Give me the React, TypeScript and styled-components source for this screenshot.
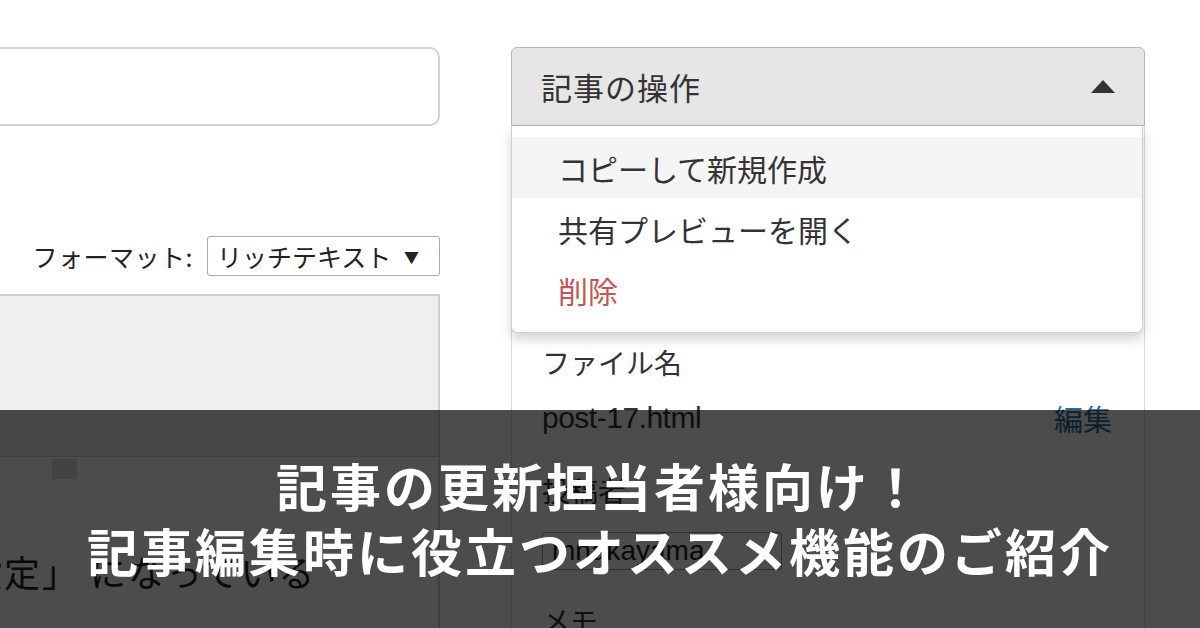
import React from "react";
import styled, { createGlobalStyle } from "styled-components";

const GlobalStyle = createGlobalStyle`
  html, body { margin: 0; padding: 0; background: #fff; }
  body {
    font-family: "Noto Sans CJK JP", "Noto Sans", sans-serif;
    color: #333;
    overflow: hidden;
  }
  * { box-sizing: border-box; }
`;

const Page = styled.div`
  position: relative;
  width: 1200px;
  height: 628px;
  overflow: hidden;
  background: #fff;
`;

const Columns = styled.div`
  display: grid;
  grid-template-columns: 480px 634px;
  column-gap: 71px;
  margin-left: -40px;
  padding-top: 47px;
`;

const LeftCol = styled.div`
  display: flex;
  flex-direction: column;
`;

const TitleInput = styled.div`
  height: 79px;
  border: 2px solid #d2d2d2;
  border-radius: 10px;
  background: #fff;
`;

const FormatRow = styled.div`
  margin-top: 110px;
  display: flex;
  justify-content: flex-end;
  align-items: center;
  gap: 14px;
`;

const FormatLabel = styled.span`
  font-size: 25px;
  color: #222;
  letter-spacing: 0.5px;
`;

const Select = styled.div<{ $w: number }>`
  width: ${(p) => p.$w}px;
  height: 40px;
  border: 1px solid #a9a9a9;
  border-radius: 3px;
  background: #fff;
  display: flex;
  align-items: center;
  justify-content: space-between;
  padding: 0 20px 0 9px;
  font-size: 25px;
  color: #222;
  line-height: 1;
`;

const Caret = styled.span`
  font-size: 15px;
  color: #222;
`;

const Editor = styled.div`
  margin-top: 18px;
  border: 2px solid #cfcfcf;
  display: flex;
  flex-direction: column;
  height: 420px;
`;

const Toolbar = styled.div`
  height: 161px;
  background: #efefef;
  border-bottom: 1px solid #d0d0d0;
  flex-shrink: 0;
`;

const EditorBody = styled.div`
  position: relative;
  flex: 1;
  background: #fff;
  padding: 2px 0 0 40px;
`;

const Handle = styled.div`
  width: 25px;
  height: 20px;
  background: #e2e2e2;
  margin-left: 50px;
`;

const BodyLine = styled.div`
  margin-left: -150px;
  margin-top: 66px;
  font-size: 36px;
  color: #222;
  white-space: nowrap;
  letter-spacing: 2px;
  & + & { margin-top: 22px; }
`;

const RightCol = styled.div`
  display: flex;
  flex-direction: column;
`;

const Dropdown = styled.div`
  position: relative;
  z-index: 2;
`;

const DropButton = styled.div`
  height: 79px;
  background: #e6e6e6;
  border: 1px solid #b5b5b5;
  border-radius: 6px 6px 0 0;
  display: flex;
  align-items: center;
  justify-content: space-between;
  padding: 0 29px 0 29px;
  font-size: 31px;
  color: #333;
  letter-spacing: 1px;
`;

const Menu = styled.div`
  position: absolute;
  top: 100%;
  left: 0;
  right: 2px;
  background: #fff;
  border: 1px solid #cfcfcf;
  border-top: none;
  border-radius: 0 0 6px 6px;
  box-shadow: 0 6px 12px rgba(0, 0, 0, 0.18);
  padding: 11px 0 12px;
`;

const MenuItem = styled.div<{ $active?: boolean; $danger?: boolean }>`
  height: 61px;
  display: flex;
  align-items: center;
  padding-left: 46px;
  font-size: 30px;
  color: ${(p) => (p.$danger ? "#c55552" : "#333")};
  background: ${(p) => (p.$active ? "#f5f5f5" : "transparent")};
`;

const Panel = styled.div`
  border: 1px solid #dcdcdc;
  border-top: none;
  padding: 216px 30px 0 30px;
  height: 520px;
  display: flex;
  flex-direction: column;
`;

const FieldLabel = styled.div<{ $gap: number }>`
  margin-top: ${(p) => p.$gap}px;
  height: 40px;
  display: flex;
  align-items: center;
  font-size: 28px;
  color: #333;
`;

const FileRow = styled.div`
  margin-top: 16px;
  height: 40px;
  display: flex;
  align-items: center;
  justify-content: space-between;
`;

const FileName = styled.span`
  font-family: "Liberation Sans", Arial, sans-serif;
  font-size: 30px;
  color: #333;
  letter-spacing: -0.5px;
`;

const EditLink = styled.span`
  font-size: 29px;
  color: #2d6a9c;
  margin-right: 2px;
`;

const AuthorSelect = styled(Select)`
  margin-top: 22px;
  height: 38px;
  font-family: "Liberation Sans", Arial, sans-serif;
  font-size: 28px;
  border-color: #999;
  padding-right: 14px;
`;

const Overlay = styled.div`
  position: absolute;
  left: 0;
  right: 0;
  bottom: 0;
  height: 218px;
  background: rgba(0, 0, 0, 0.7);
  z-index: 5;
  display: flex;
  flex-direction: column;
  align-items: center;
  justify-content: center;
  padding-bottom: 2px;
`;

const Headline = styled.div`
  color: #fff;
  font-family: "Noto Sans CJK JP", sans-serif;
  font-weight: 700;
  font-size: 51px;
  line-height: 65px;
  letter-spacing: 3px;
  white-space: nowrap;
`;

const UpTriangle = () => (
  <svg width="24" height="13" viewBox="0 0 24 13">
    <polygon points="12,0 24,13 0,13" fill="#333" />
  </svg>
);

export default function App() {
  return (
    <>
      <GlobalStyle />
      <Page>
        <Columns>
          <LeftCol>
            <TitleInput />
            <FormatRow>
              <FormatLabel>フォーマット:</FormatLabel>
              <Select $w={233}>
                <span>リッチテキスト</span>
                <Caret>▼</Caret>
              </Select>
            </FormatRow>
            <Editor>
              <Toolbar />
              <EditorBody>
                <Handle />
                <BodyLine>「公開設定」 になっている</BodyLine>
                <BodyLine>「保存」 をクリックする</BodyLine>
              </EditorBody>
            </Editor>
          </LeftCol>
          <RightCol>
            <Dropdown>
              <DropButton>
                <span>記事の操作</span>
                <UpTriangle />
              </DropButton>
              <Menu>
                <MenuItem $active>コピーして新規作成</MenuItem>
                <MenuItem>共有プレビューを開く</MenuItem>
                <MenuItem $danger>削除</MenuItem>
              </Menu>
            </Dropdown>
            <Panel>
              <FieldLabel $gap={0}>ファイル名</FieldLabel>
              <FileRow>
                <FileName>post-17.html</FileName>
                <EditLink>編集</EditLink>
              </FileRow>
              <FieldLabel $gap={32}>投稿者</FieldLabel>
              <AuthorSelect $w={240}>
                <span>mnakayama</span>
                <Caret>▼</Caret>
              </AuthorSelect>
              <FieldLabel $gap={30}>メモ</FieldLabel>
            </Panel>
          </RightCol>
        </Columns>
        <Overlay>
          <Headline>記事の更新担当者様向け！</Headline>
          <Headline>記事編集時に役立つオススメ機能のご紹介</Headline>
        </Overlay>
      </Page>
    </>
  );
}
